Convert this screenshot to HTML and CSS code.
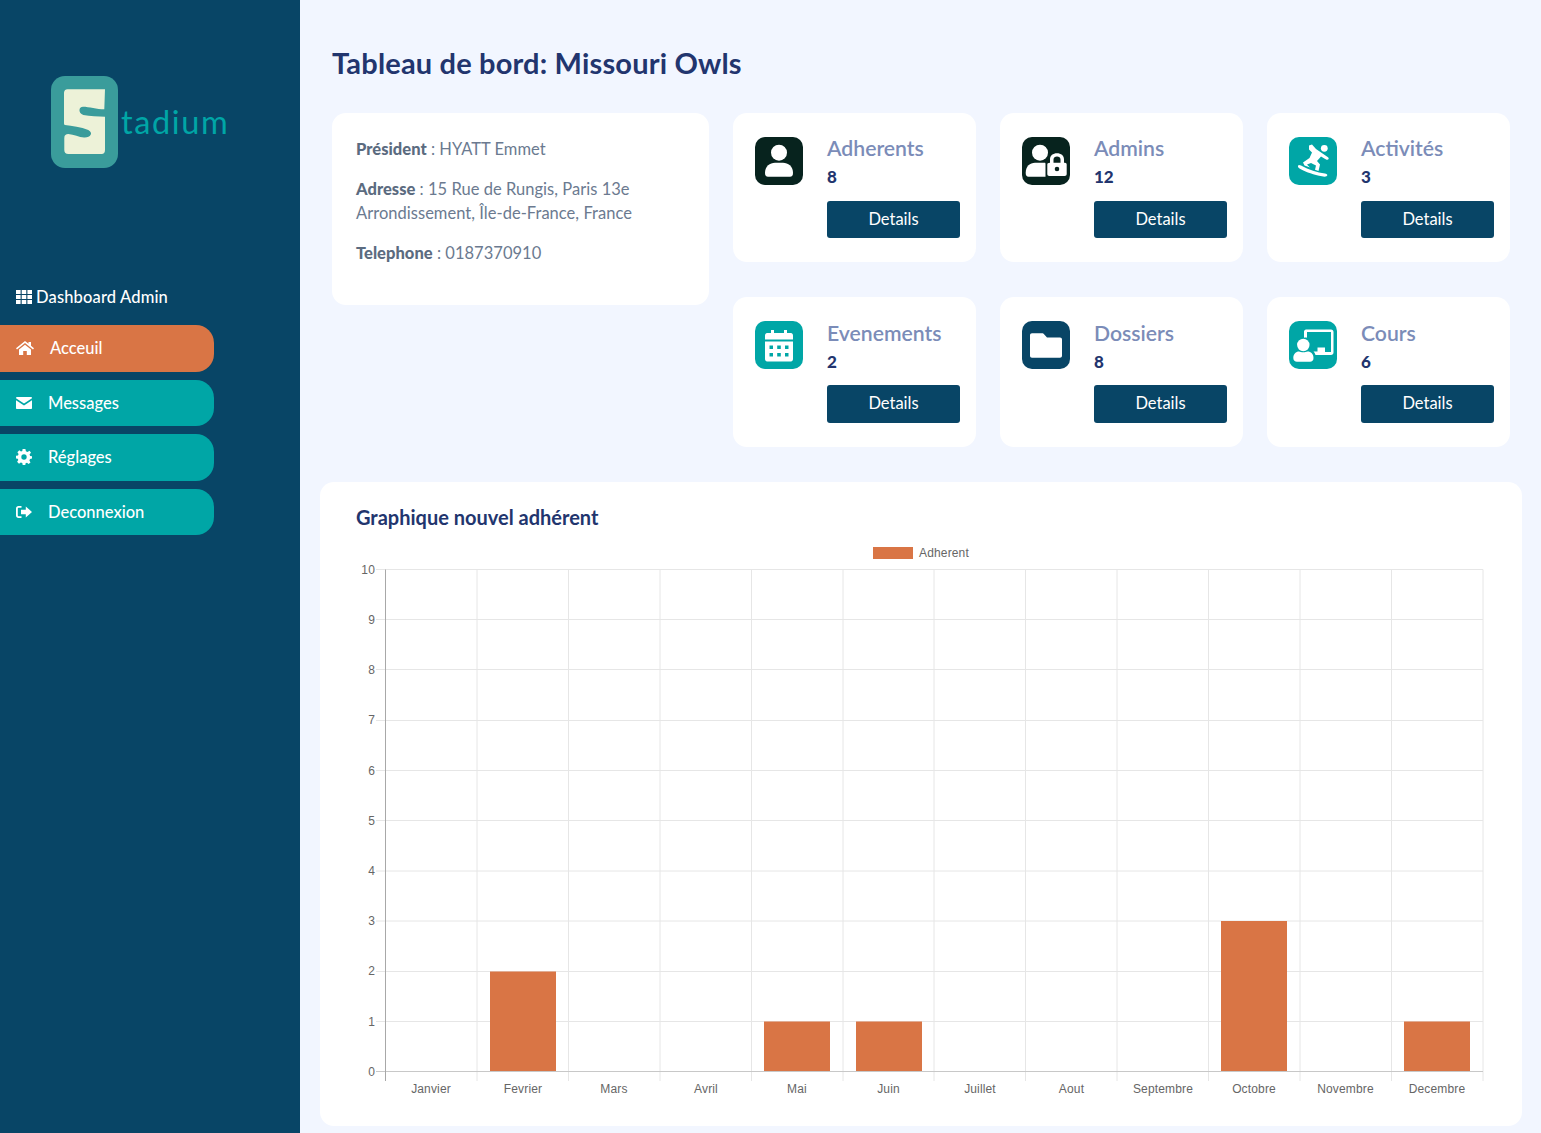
FILE: index.html
```html
<!doctype html>
<html>
<head>
<meta charset="utf-8">
<title>Tableau de bord</title>
<link rel="stylesheet" href="styles.css">
</head>
<body>
<aside class="sidebar">
	<div class="logo">
		<svg class="logoMark" viewBox="0 0 67 92" width="67" height="92">
			<rect width="67" height="92" rx="14" fill="#3a9c9b"/>
			<path d="M16.500 13.300H54L53.300 33.300C46 33.300 38 30.700 32 30.700C27.500 30.700 27 37 32.300 39C39 40 47 40.700 54 40.700V74C54 76.500 52.800 78 50.700 78H17.300C14.800 78 13.300 76.500 13.300 74V62C13.300 59 15 58 17.300 58C23 58.500 28 61.300 33 61.500C39 62 43 57 37.300 54C30 51 21 50 14 49C13.300 49 13 48 13 47V17C13 14.800 14.300 13.300 16.500 13.300Z" fill="#edf2d8"/>
		</svg>
		<span class="logoText">tadium</span>
	</div>
	<div class="sideTitle">
		<svg viewBox="0 0 16 14" width="16" height="14" fill="#fff"><path d="M0 0h4.600v4H0zM5.700 0h4.600v4H5.700zM11.400 0H16v4h-4.600zM0 5h4.600v4H0zM5.700 5h4.600v4H5.700zM11.400 5H16v4h-4.600zM0 10h4.600v4H0zM5.700 10h4.600v4H5.700zM11.400 10H16v4h-4.600z"/></svg>
		Dashboard Admin
	</div>
	<nav class="menu">
		<a class="menuItem active" href="#">
			<svg viewBox="0 0 18 14" width="18" height="14" fill="#fff"><path d="M9 0L12.500 2.800V1H15V4.800L18 7.300 17 8.400 9 2 1 8.400 0 7.300zM3 8.500L9 3.700 15 8.500V14H10.800V10H7.200V14H3z"/></svg>
			<span>Acceuil</span>
		</a>
		<a class="menuItem" href="#">
			<svg viewBox="0 0 16 12" width="16" height="12" fill="#fff"><path d="M1 0H15C15.800 0 16 .7 16 1.300L8 6.500 0 1.300C0 .7.300 0 1 0zM0 3.300L8 8.500 16 3.300V11C16 11.600 15.600 12 15 12H1C.4 12 0 11.600 0 11z"/></svg>
			<span>Messages</span>
		</a>
		<a class="menuItem" href="#">
			<svg viewBox="0 0 16 16" width="16" height="16"><path d="M6.600 0H9.400L9.900 2.200 11.500 2.900 13.500 1.700 15 3.700 13.600 5.300 14.100 6.900 16 7.200V9.600L14 10 13.400 11.500 14.500 13.400 12.600 15 11 13.800 9.600 14.200 9.300 16H6.700L6.300 14.100 4.800 13.500 3 14.700 1.100 12.800 2.300 11.100 1.800 9.700 0 9.400V6.800L2 6.400 2.600 4.900 1.400 3.200 3.300 1.300 5 2.400 6.300 1.900z" fill="#fff"/><circle cx="8" cy="8" r="2.700" fill="#00a6a6"/></svg>
			<span>Réglages</span>
		</a>
		<a class="menuItem" href="#">
			<svg viewBox="0 0 16 12" width="16" height="12" fill="#fff"><path d="M5.500 0V1.800H2.800C2.200 1.800 1.800 2.200 1.800 2.800V9.200C1.800 9.800 2.200 10.200 2.800 10.200H5.500V12H2.500C1 12 0 11 0 9.500V2.500C0 1 1 0 2.500 0zM9.800 .4L16 6 9.800 11.600V8.300H5V3.700H9.800z"/></svg>
			<span>Deconnexion</span>
		</a>
	</nav>
</aside>

<main class="content">
	<h1 class="pageTitle">Tableau de bord: Missouri Owls</h1>

	<section class="cards">
		<div class="card infoCard">
			<p><strong>Président</strong> : HYATT Emmet</p>
			<p><strong>Adresse</strong> : 15 Rue de Rungis, Paris 13e Arrondissement, Île-de-France, France</p>
			<p><strong>Telephone</strong> : 0187370910</p>
		</div>

		<div class="card statCard">
			<div class="statIcon dark">
				<svg viewBox="0 0 48 48" fill="#fff"><circle cx="24" cy="15.700" r="8"/><path d="M10 36C10 29 15 25.700 20 25.700H28C33 25.700 38 29 38 36C38 38.500 37 39.700 35 39.700H13C11 39.700 10 38.500 10 36Z"/></svg>
			</div>
			<div class="statBody">
				<div class="statTitle">Adherents</div>
				<div class="statValue">8</div>
				<a class="detailsBtn" href="#">Details</a>
			</div>
		</div>

		<div class="card statCard">
			<div class="statIcon dark">
				<svg viewBox="0 0 48 48" fill="#fff"><circle cx="18" cy="15.700" r="8"/><path d="M3.700 36C3.700 29 8 25.700 13 25.700H23C23.500 25.700 23.500 27 23.500 28V39.700H6.500C4.700 39.700 3.700 38.500 3.700 36Z"/><path fill-rule="evenodd" d="M28 25.700V22.500C28 18.500 31 16.300 35 16.300S42 18.500 42 22.500V25.700H43C44 25.700 44.700 26.400 44.700 27.500V37C44.700 38.300 44 39 42.700 39H27.300C26 39 25.300 38.300 25.300 37V27.500C25.300 26.400 26 25.700 28 25.700ZM31.500 25.700H38.500V22.500C38.500 20.500 37 19.500 35 19.500S31.500 20.500 31.500 22.500ZM35 29.700A2.300 2.300 0 1 0 35 34.300 2.300 2.300 0 1 0 35 29.700Z"/></svg>
			</div>
			<div class="statBody">
				<div class="statTitle">Admins</div>
				<div class="statValue">12</div>
				<a class="detailsBtn" href="#">Details</a>
			</div>
		</div>

		<div class="card statCard">
			<div class="statIcon teal">
				<svg viewBox="0 0 48 48" fill="#fff"><circle cx="35.300" cy="11.300" r="3.400"/><path d="M20 8.500L23 7.500 27 12 39 20.300C40.500 21.300 39.500 23.500 37.500 22.700L32 19.500 28 24 31 27.500 29.500 34 26 32.800 27 28.500 22 26 18 27.500 21 30.500 15.500 28.500 14 25.500 20.500 21 23 15.500 20 12.500Z"/><path d="M10 28L12 28.500C20 33 28 35.500 36 36.500 38.500 36.800 39 38.500 37.500 39.300 36 40 33 39.500 30 38.800 22 37 15 34 10.500 31.500 8.500 30.500 8.500 28.500 10 28Z"/></svg>
			</div>
			<div class="statBody">
				<div class="statTitle">Activités</div>
				<div class="statValue">3</div>
				<a class="detailsBtn" href="#">Details</a>
			</div>
		</div>

		<div class="card statCard">
			<div class="statIcon teal">
				<svg viewBox="0 0 48 48" fill="#fff"><path fill-rule="evenodd" d="M16 9H19V12H29V9H32V12H36C37 12 38 13 38 14.500V18.500H10V14.500C10 13 11 12 12 12H16ZM10 20.500H38V38C38 39.500 37 40.500 36 40.500H12C11 40.500 10 39.500 10 38ZM14.500 24.500V28H18V24.500ZM22.200 24.500V28H25.800V24.500ZM30 24.500V28H33.500V24.500ZM14.500 32V35.500H18V32ZM22.200 32V35.500H25.800V32ZM30 32V35.500H33.500V32Z"/></svg>
			</div>
			<div class="statBody">
				<div class="statTitle">Evenements</div>
				<div class="statValue">2</div>
				<a class="detailsBtn" href="#">Details</a>
			</div>
		</div>

		<div class="card statCard">
			<div class="statIcon navy">
				<svg viewBox="0 0 48 48" fill="#fff"><path d="M10 12.300H20C21 12.300 21.500 12.700 22.500 13.700L25 16.500H38C39.200 16.500 40 17.300 40 18.500V34.700C40 35.900 39.200 36.700 38 36.700H10C8.800 36.700 8 35.900 8 34.700V14.300C8 13.100 8.800 12.300 10 12.300Z"/></svg>
			</div>
			<div class="statBody">
				<div class="statTitle">Dossiers</div>
				<div class="statValue">8</div>
				<a class="detailsBtn" href="#">Details</a>
			</div>
		</div>

		<div class="card statCard">
			<div class="statIcon teal">
				<svg viewBox="0 0 48 48" fill="#fff"><circle cx="14.300" cy="24" r="6.200"/><path d="M4.300 37C4.300 33 7 30.500 10 30.500 12 31.500 16.500 31.500 18.500 30.500 22 30.500 24.500 33 24.500 37 24.500 39.500 23 40.700 21 40.700H8C6 40.700 4.300 39.500 4.300 37Z"/><path d="M17 8.500H42C43.500 8.500 44.500 9.500 44.500 11V31.500C44.500 33 43.500 34 42 34H26.500C26 32.500 25.500 31.500 24.500 30.500H28.500V26.500H36V31H42V11H18V16.800C17 16.500 16 16.500 15 16.800V10.500C15 9.500 16 8.500 17 8.500Z"/></svg>
			</div>
			<div class="statBody">
				<div class="statTitle">Cours</div>
				<div class="statValue">6</div>
				<a class="detailsBtn" href="#">Details</a>
			</div>
		</div>
	</section>

	<section class="chartPanel">
		<h2 class="chartTitle">Graphique nouvel adhérent</h2>
		<svg class="chart" viewBox="356 541 1130 560" width="1130" height="560">
			<rect x="873" y="547" width="40" height="12" fill="#d97545"/>
			<text class="legend" x="919" y="556.500">Adherent</text>

			<path class="grid" d="M376 569.500H1483M376 619.500H1483M376 669.500H1483M376 720.500H1483M376 770.500H1483M376 820.500H1483M376 871H1483M376 921H1483M376 971.500H1483M376 1021.500H1483"/>
			<path class="grid" d="M477 569.500V1081M568.500 569.500V1081M660 569.500V1081M751.500 569.500V1081M843 569.500V1081M934 569.500V1081M1025.500 569.500V1081M1117 569.500V1081M1208.500 569.500V1081M1300 569.500V1081M1391.500 569.500V1081M1483 569.500V1081"/>

			<rect class="bar" x="490" y="971.500" width="66" height="100"/>
			<rect class="bar" x="764" y="1021.500" width="66" height="50"/>
			<rect class="bar" x="856" y="1021.500" width="66" height="50"/>
			<rect class="bar" x="1221" y="921" width="66" height="150.500"/>
			<rect class="bar" x="1404" y="1021.500" width="66" height="50"/>

			<path class="zero" d="M376 1071.500H1483"/>
			<path class="axis" d="M385.500 569.500V1081"/>

			<g class="yLabels">
				<text x="375" y="573.500">10</text>
				<text x="375" y="623.500">9</text>
				<text x="375" y="673.500">8</text>
				<text x="375" y="724">7</text>
				<text x="375" y="774.500">6</text>
				<text x="375" y="824.500">5</text>
				<text x="375" y="875">4</text>
				<text x="375" y="925">3</text>
				<text x="375" y="975">2</text>
				<text x="375" y="1026">1</text>
				<text x="375" y="1076">0</text>
			</g>
			<g class="xLabels">
				<text x="431" y="1093">Janvier</text>
				<text x="523" y="1093">Fevrier</text>
				<text x="614" y="1093">Mars</text>
				<text x="706" y="1093">Avril</text>
				<text x="797" y="1093">Mai</text>
				<text x="888.500" y="1093">Juin</text>
				<text x="980" y="1093">Juillet</text>
				<text x="1071.500" y="1093">Aout</text>
				<text x="1163" y="1093">Septembre</text>
				<text x="1254" y="1093">Octobre</text>
				<text x="1345.500" y="1093">Novembre</text>
				<text x="1437" y="1093">Decembre</text>
			</g>
		</svg>
	</section>
</main>
</body>
</html>
```

FILE: styles.css
```css
*{
	box-sizing: border-box;
}
body{
	margin: 0;
	min-height: 1133px;
	display: flex;
	background: #f2f6ff;
	font-family: "Lato", "Noto Sans", sans-serif;
	color: #6b7a90;
}
a{
	text-decoration: none;
}

/* sidebar */
.sidebar{
	width: 300px;
	flex-shrink: 0;
	background: #084566;
	color: #fff;
	padding-top: 76px;
}
.logo{
	display: flex;
	align-items: center;
	padding-left: 51px;
}
.logoMark{
	display: block;
}
.logoText{
	margin: 0 0 1px 3px;
	font-size: 32.500px;
	letter-spacing: 1.6px;
	color: #00a6a6;
}
.sideTitle{
	display: flex;
	align-items: center;
	gap: 4px;
	margin-top: 119px;
	padding-left: 16px;
	height: 20px;
	font-size: 16.500px;
	font-weight: 500;
	letter-spacing: .15px;
}
.menu{
	margin-top: 18px;
	display: flex;
	flex-direction: column;
	gap: 8px;
	width: 214px;
}
.menuItem{
	display: flex;
	align-items: center;
	gap: 16px;
	height: 46.500px;
	padding-left: 16px;
	background: #00a6a6;
	border-radius: 0 18px 18px 0;
	color: #fff;
	font-size: 16.500px;
	font-weight: 500;
}
.menuItem.active{
	background: #d97545;
}

/* main */
.content{
	flex: 1;
	padding: 45px 31px 0 32px;
}
.pageTitle{
	margin: 0 0 32px;
	font-size: 29px;
	line-height: 36px;
	font-weight: 700;
	letter-spacing: .17px;
	color: #22356e;
}
.cards{
	display: grid;
	grid-template-columns: 377px repeat(3, 243px);
	column-gap: 24px;
	row-gap: 35px;
	align-items: start;
}
.card{
	background: #fff;
	border-radius: 14px;
}
.infoCard{
	grid-row: 1 / 3;
	padding: 24px;
	font-size: 16.500px;
	line-height: 24px;
	letter-spacing: .03px;
}
.infoCard p{
	margin: 0 0 16px;
}
.infoCard strong{
	font-weight: 900;
	color: #5b6b80;
}
.statCard{
	display: flex;
	gap: 24px;
	padding: 24px 16px 24px 22px;
}
.statIcon{
	width: 48px;
	height: 48px;
	flex-shrink: 0;
	border-radius: 10px;
}
.statIcon svg{
	display: block;
	width: 48px;
	height: 48px;
}
.statIcon.dark{
	background: #07231e;
}
.statIcon.teal{
	background: #00a6a6;
}
.statIcon.navy{
	background: #084566;
}
.statBody{
	flex: 1;
}
.statTitle{
	margin-bottom: 8px;
	padding-top: .2px;
	font-size: 21.200px;
	line-height: 22px;
	font-weight: 600;
	color: #7b8cb8;
}
.statValue{
	margin-bottom: 13.800px;
	font-size: 17px;
	line-height: 20px;
	font-weight: 900;
	color: #22356e;
}
.detailsBtn{
	display: block;
	height: 37.400px;
	line-height: 36.400px;
	background: #084566;
	border-radius: 3px;
	color: #fff;
	font-size: 16.500px;
	text-align: center;
}

/* chart */
.chartPanel{
	margin: 35px -12px 0;
	height: 644px;
	padding: 23px 36px 0;
	background: #fff;
	border-radius: 14px;
}
.chartTitle{
	margin: 0 0 12px;
	font-size: 20px;
	line-height: 24px;
	font-weight: 700;
	color: #22356e;
}
.chart{
	display: block;
}
.chart text{
	font-family: "Liberation Sans", Arial, sans-serif;
	font-size: 12px;
	letter-spacing: .15px;
	fill: #666;
}
.grid{
	fill: none;
	stroke: #e6e6e6;
	stroke-width: 1;
}
.zero{
	fill: none;
	stroke: #c8c8c8;
	stroke-width: 1;
}
.axis{
	fill: none;
	stroke: #a8a8a8;
	stroke-width: 1;
}
.bar{
	fill: #d97545;
}
.yLabels text{
	text-anchor: end;
}
.xLabels text{
	text-anchor: middle;
}
```
